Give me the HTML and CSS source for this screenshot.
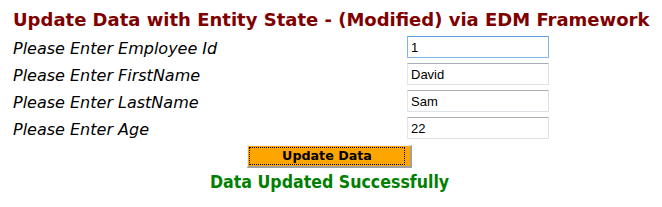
FILE: index.html
```html
<!DOCTYPE html>
<html>
<head>
<meta charset="utf-8">
<link rel="stylesheet" href="styles.css">
</head>
<body>
<div class="page">
  <h1 class="title">Update Data with Entity State - (Modified) via EDM Framework</h1>
  <div class="form">
    <label class="label">Please Enter Employee Id</label>
    <input class="field focused" type="text" value="1">
    <label class="label">Please Enter FirstName</label>
    <input class="field" type="text" value="David">
    <label class="label">Please Enter LastName</label>
    <input class="field" type="text" value="Sam">
    <label class="label">Please Enter Age</label>
    <input class="field" type="text" value="22">
  </div>
  <div class="actions">
    <button class="btn" type="button"><span class="btn-inner">Update Data</span></button>
  </div>
  <div class="message">Data Updated Successfully</div>
</div>
</body>
</html>
```
FILE: styles.css
```css
html, body {
  margin: 0;
  padding: 0;
  background: #ffffff;
}

.page {
  width: 659px;
  padding-top: 9px;
}

.title {
  margin: 0 0 0 13px;
  font-family: "DejaVu Sans", Verdana, sans-serif;
  font-weight: bold;
  font-size: 18px;
  line-height: 22px;
  color: #800000;
  white-space: nowrap;
}

.form {
  display: grid;
  grid-template-columns: 394px 142px;
  grid-auto-rows: 27px;
  align-items: center;
  margin: 2px 0 0 13px;
}

.label {
  font-family: "DejaVu Sans", Verdana, sans-serif;
  font-style: italic;
  font-size: 16px;
  color: #000000;
  white-space: nowrap;
  padding-top: 4px;
}

.field {
  box-sizing: border-box;
  width: 142px;
  height: 22px;
  margin: 0;
  padding: 1px 3px 0;
  font-family: "Liberation Sans", Arial, sans-serif;
  font-size: 13px;
  color: #000000;
  background: #ffffff;
  border: 1px solid #dde2e8;
  border-top-color: #abadb3;
  border-left-color: #e2e3ea;
  outline: none;
  border-radius: 1px;
}

.field.focused {
  border-color: #7eb4ea;
  border-top-color: #569de5;
}

.actions {
  display: flex;
  justify-content: center;
  margin-top: 4px;
}

.btn {
  box-sizing: border-box;
  width: 165px;
  height: 23px;
  margin: 0;
  padding: 1px 5px 1px 1px;
  background: #ffa500;
  border-style: solid;
  border-width: 1px 2px 2px 1px;
  border-color: #f0f0f0 #a0a0a0 #a0a0a0 #f0f0f0;
  cursor: pointer;
  display: flex;
}

.btn-inner {
  flex: 1;
  border: 1px dotted #000000;
  font-family: "DejaVu Sans", Verdana, sans-serif;
  font-weight: bold;
  font-size: 12.7px;
  line-height: 15px;
  color: #000000;
  text-align: center;
}

.message {
  margin-top: 3px;
  text-align: center;
  font-family: "DejaVu Sans Condensed", "DejaVu Sans", sans-serif;
  font-weight: bold;
  font-size: 17.6px;
  line-height: 22px;
  color: #008000;
}
```
